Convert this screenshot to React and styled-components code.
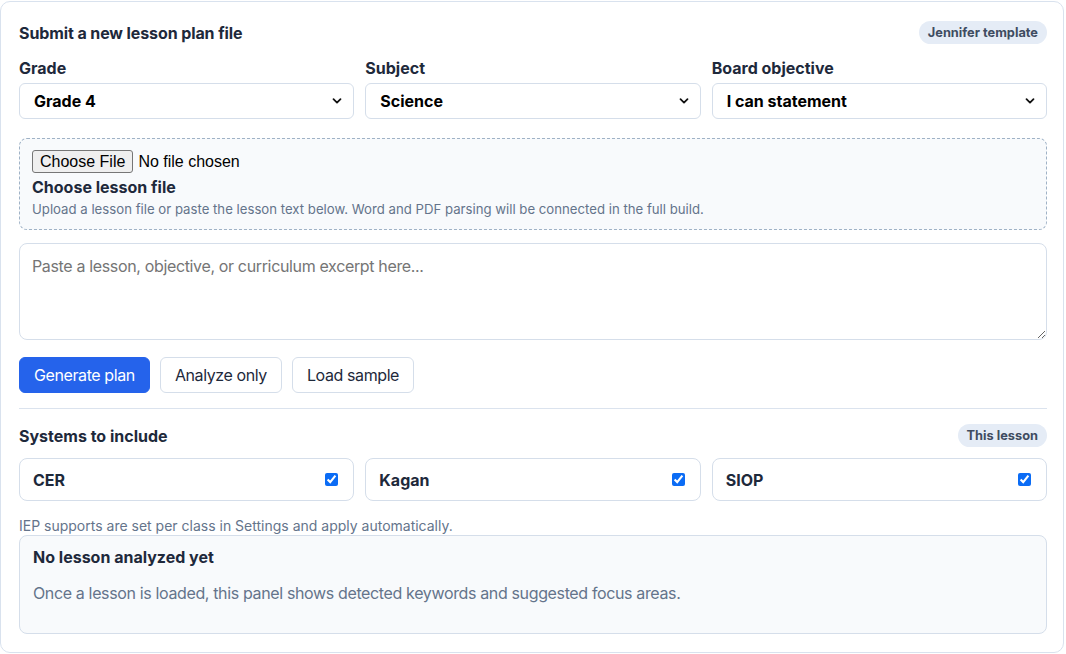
import React from "react";
import styled, { createGlobalStyle } from "styled-components";

const Global = createGlobalStyle`
  * { box-sizing: border-box; }
  html, body { margin: 0; padding: 0; background: #ffffff; }
  body { font-family: Inter, "Noto Sans", sans-serif; color: #1e293b; }
`;

const Card = styled.div`
  margin: 1px 1px 0 0;
  width: 1064px;
  height: 652px;
  border: 1px solid #d9e2ee;
  border-radius: 10px;
  background: #fff;
  padding: 19px 16px 18px 18px;
  display: flex;
  flex-direction: column;
`;

const HeaderRow = styled.div`
  display: flex;
  align-items: center;
  justify-content: space-between;
  height: 23px;
  margin-bottom: ${(p) => p.$mb || 0}px;
`;

const Title = styled.h2`
  margin: 0;
  font-size: 16px;
  font-weight: 700;
  color: #1e293b;
  letter-spacing: -0.1px;
`;

const Pill = styled.span`
  display: inline-flex;
  align-items: center;
  height: 23px;
  padding: 0 9px;
  border-radius: 999px;
  background: #e5ecf6;
  color: #3f4c61;
  font-size: 12.8px;
  font-weight: 700;
`;

const Grid3 = styled.div`
  display: grid;
  grid-template-columns: 1fr 1fr 1fr;
  gap: 11px;
`;

const Field = styled.label`
  display: flex;
  flex-direction: column;
  gap: 5px;
`;

const FieldLabel = styled.span`
  font-size: 16px;
  font-weight: 700;
  line-height: 20px;
  color: #1e293b;
`;

const chevron =
  "data:image/svg+xml;utf8,<svg xmlns='http://www.w3.org/2000/svg' width='10' height='8' viewBox='0 0 10 8'><path d='M1.5 2.2 L5 5.6 L8.5 2.2' fill='none' stroke='%23111' stroke-width='1.8' stroke-linecap='round' stroke-linejoin='round'/></svg>";

const Select = styled.select`
  appearance: none;
  height: 36px;
  width: 100%;
  border: 1px solid #d5deea;
  border-radius: 6px;
  background: #fff url("${chevron}") no-repeat right 11px center;
  padding: 0 14px;
  font-family: Inter, sans-serif;
  font-size: 16px;
  font-weight: 700;
  color: #000;
`;

const Drop = styled.div`
  margin-top: 19px;
  border: 1px dashed #9fb2c6;
  border-radius: 8px;
  background: #f8fafc;
  padding: 11px 12px 12px 12px;
  height: 92px;
`;

const FileInput = styled.input`
  font-family: "Liberation Sans", Arial, sans-serif;
  font-size: 16px;
  color: #000;
  display: block;
  height: 23px;
  &::file-selector-button {
    font-family: "Liberation Sans", Arial, sans-serif;
    font-size: 16px;
    height: 23px;
    padding: 0 7px;
    margin-right: 5px;
    border: 1px solid #767676;
    border-radius: 3px;
    background: #efefef;
    color: #000;
  }
`;

const DropTitle = styled.div`
  margin-top: 3px;
  font-size: 16px;
  font-weight: 700;
  line-height: 22px;
  color: #1e293b;
`;

const Hint = styled.div`
  font-size: 13.2px;
  color: #64748b;
  line-height: 20px;
  margin-top: 1px;
`;

const TextArea = styled.textarea`
  margin-top: 13px;
  height: 97px;
  width: 100%;
  border: 1px solid #d5deea;
  border-radius: 8px;
  padding: 11px 12px;
  font-family: Inter, sans-serif;
  font-size: 16px;
  line-height: 22px;
  letter-spacing: -0.35px;
  color: #1e293b;
  resize: vertical;
  &::placeholder { color: #757575; }
`;

const Actions = styled.div`
  display: flex;
  gap: 10px;
  margin-top: 17px;
`;

const Button = styled.button`
  height: 36px;
  padding: 0 14px;
  border-radius: 6px;
  font-family: Inter, sans-serif;
  font-size: 16px;
  letter-spacing: -0.4px;
  border: 1px solid ${(p) => (p.$primary ? "#2563eb" : "#d5deea")};
  background: ${(p) => (p.$primary ? "#2563eb" : "#fff")};
  color: ${(p) => (p.$primary ? "#fff" : "#1e293b")};
`;

const Divider = styled.hr`
  margin: 15px 0 15px 0;
  border: 0;
  border-top: 1px solid #dbe3ee;
`;

const Option = styled.label`
  display: flex;
  align-items: center;
  justify-content: space-between;
  height: 43px;
  padding: 0 15px 0 13px;
  border: 1px solid #d5deea;
  border-radius: 8px;
  font-size: 16px;
  font-weight: 700;
  color: #1e293b;
`;

const Check = styled.input`
  width: 13px;
  height: 13px;
  margin: 0;
  accent-color: #0b6cf5;
`;

const Panel = styled.div`
  height: 99px;
  border: 1px solid #d5deea;
  border-radius: 8px;
  background: #f8fafc;
  padding: 10px 13px;
`;

const PanelTitle = styled.div`
  font-size: 16px;
  font-weight: 700;
  line-height: 22px;
  color: #1e293b;
`;

const PanelText = styled.p`
  margin: 14px 0 0 0;
  font-size: 16px;
  line-height: 22px;
  letter-spacing: -0.36px;
  color: #64748b;
`;

const Note = styled.div`
  margin-top: 16px;
  font-size: 14px;
  line-height: 18px;
  color: #64748b;
`;

export default function App() {
  return (
    <>
      <Global />
      <Card>
        <HeaderRow $mb={14}>
          <Title>Submit a new lesson plan file</Title>
          <Pill>Jennifer template</Pill>
        </HeaderRow>
        <Grid3>
          <Field>
            <FieldLabel>Grade</FieldLabel>
            <Select defaultValue="Grade 4">
              <option>Grade 4</option>
            </Select>
          </Field>
          <Field>
            <FieldLabel>Subject</FieldLabel>
            <Select defaultValue="Science">
              <option>Science</option>
            </Select>
          </Field>
          <Field>
            <FieldLabel>Board objective</FieldLabel>
            <Select defaultValue="I can statement">
              <option>I can statement</option>
            </Select>
          </Field>
        </Grid3>
        <Drop>
          <FileInput type="file" />
          <DropTitle>Choose lesson file</DropTitle>
          <Hint>
            Upload a lesson file or paste the lesson text below. Word and PDF
            parsing will be connected in the full build.
          </Hint>
        </Drop>
        <TextArea placeholder="Paste a lesson, objective, or curriculum excerpt here..." />
        <Actions>
          <Button $primary>Generate plan</Button>
          <Button>Analyze only</Button>
          <Button>Load sample</Button>
        </Actions>
        <Divider />
        <HeaderRow $mb={11}>
          <FieldLabel>Systems to include</FieldLabel>
          <Pill>This lesson</Pill>
        </HeaderRow>
        <Grid3>
          {["CER", "Kagan", "SIOP"].map((s) => (
            <Option key={s}>
              {s}
              <Check type="checkbox" defaultChecked />
            </Option>
          ))}
        </Grid3>
        <Note>IEP supports are set per class in Settings and apply automatically.</Note>
        <Panel>
          <PanelTitle>No lesson analyzed yet</PanelTitle>
          <PanelText>
            Once a lesson is loaded, this panel shows detected keywords and
            suggested focus areas.
          </PanelText>
        </Panel>
      </Card>
    </>
  );
}
